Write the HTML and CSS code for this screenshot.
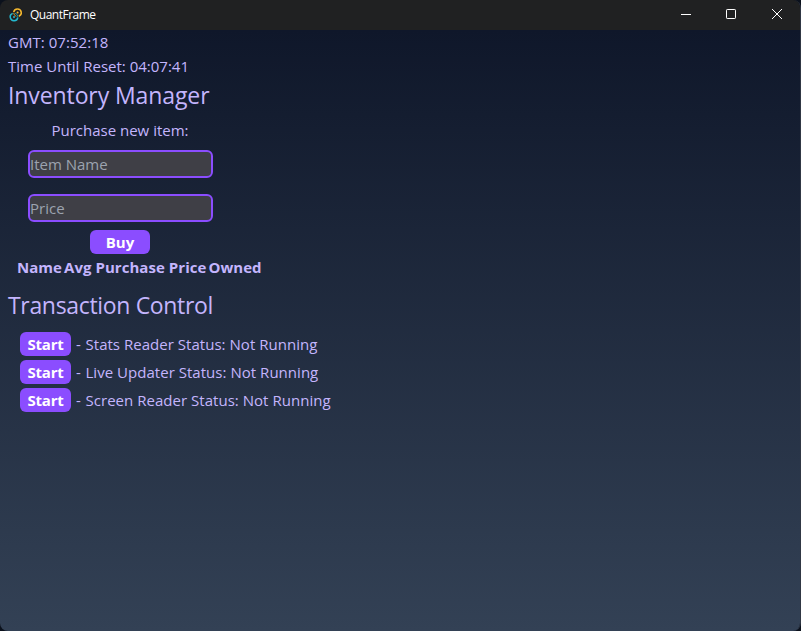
FILE: index.html
```html
<!DOCTYPE html>
<html lang="en">
<head>
<meta charset="utf-8">
<title>QuantFrame</title>
<link rel="stylesheet" href="styles.css">
</head>
<body>
<div class="window">
  <header class="titlebar">
    <svg class="logo" width="14" height="14" viewBox="0 0 14 14" fill="none" stroke-width="1.5">
      <path d="M4.7 4.2A3.8 3.8 0 1 1 9.8 8.3" stroke="#f5b82e"/>
      <path d="M8.8 9.4A3.8 3.8 0 1 1 3.7 5.4" stroke="#24b9cf"/>
      <path d="M4.7 4.9A3.8 3.8 0 0 0 7.4 8.4" stroke="#c99b30" stroke-width="1"/>
      <path d="M8.8 8.7A3.8 3.8 0 0 0 6.1 5.2" stroke="#2098aa" stroke-width="1"/>
      <circle cx="8.6" cy="4.6" r="1" fill="#f5b82e"/>
      <circle cx="5" cy="9" r="1" fill="#24b9cf"/>
    </svg>
    <span class="app-name">QuantFrame</span>
    <div class="controls">
      <svg width="46" height="30" viewBox="0 0 46 30"><path d="M18 14.5h10" stroke="#fff"/></svg>
      <svg width="45" height="30" viewBox="0 0 45 30"><rect x="17.5" y="9.5" width="9" height="9" rx=".7" fill="none" stroke="#fff"/></svg>
      <svg width="46" height="30" viewBox="0 0 46 30"><path d="M18 9l10 10M28 9l-10 10" stroke="#fff"/></svg>
    </div>
  </header>
  <main class="content">
    <p class="clock gmt">GMT: 07:52:18</p>
    <p class="clock reset">Time Until Reset: 04:07:41</p>
    <h1 class="inventory-title">Inventory Manager</h1>
    <form class="purchase">
      <label class="purchase-label" for="item">Purchase new item:</label>
      <input class="field" id="item" type="text" placeholder="Item Name">
      <input class="field" type="text" placeholder="Price">
      <button class="btn buy" type="button">Buy</button>
    </form>
    <div class="columns">
      <span class="col-name">Name</span><span class="col-price">Avg Purchase Price</span><span class="col-owned">Owned</span>
    </div>
    <h1 class="transaction-title">Transaction Control</h1>
    <ul class="services">
      <li><button class="btn start" type="button">Start</button><span class="dash">-</span><span class="stats">Stats Reader Status: Not Running</span></li>
      <li><button class="btn start" type="button">Start</button><span class="dash">-</span><span class="live">Live Updater Status: Not Running</span></li>
      <li><button class="btn start" type="button">Start</button><span class="dash">-</span><span class="screen">Screen Reader Status: Not Running</span></li>
    </ul>
  </main>
</div>
</body>
</html>
```
FILE: styles.css
```css
* { box-sizing: border-box; margin: 0; padding: 0; }
html { background: #0b111c; }
body { width: 801px; height: 631px; overflow: hidden; font: 15px/24px "Open Sans", "Noto Sans", sans-serif; color: #c4b5fd; }
.window { height: 631px; border-radius: 8px; overflow: hidden; display: flex; flex-direction: column; border-right: 1px solid #303744; }
.titlebar { height: 30px; flex: none; display: flex; align-items: center; background: #202122; color: #fff; padding-left: 9px; }
.logo { margin: -1px 7px 0 0; }
.app-name { font-size: 12px; line-height: 30px; letter-spacing: -0.5px; }
.controls { margin-left: auto; display: flex; }
.controls svg { display: block; }
.content { flex: 1; padding: 0 8px; background: linear-gradient(#0f172a, #334155); white-space: nowrap; }
h1 { font-size: 23px; font-weight: 400; line-height: 32px; }
.gmt { letter-spacing: 0.05px; }
.inventory-title { margin-top: 1px; letter-spacing: -0.1px; }
.transaction-title { letter-spacing: -0.33px; }
.purchase { width: 225px; display: flex; flex-direction: column; align-items: center; margin-top: 7px; }
.purchase-label { line-height: 24px; margin: 0 1px 8px 0; }
.field { width: 185px; height: 28px; border: 2px solid #8b4dff; border-radius: 6px; background: #3f3f46; font: inherit; color: #c4b5fd; margin-bottom: 16px; }
.field + .field { margin-bottom: 8px; }
.field::placeholder { color: #9ca3af; opacity: 1; }
.btn { height: 24px; border: 0; border-radius: 6px; background: #8b4dff; color: #fff; font: 700 15px/24px "Open Sans", "Noto Sans", sans-serif; }
.buy { width: 60px; margin-right: 1px; }
.columns { display: flex; font-weight: 700; margin: 1px 0 10px 9px; }
.col-name { width: 47px; }
.col-price { width: 144.5px; letter-spacing: 0.05px; }
.services { list-style: none; margin: 11px 0 0 12px; }
.services li { display: flex; height: 24px; margin-bottom: 4px; letter-spacing: 0.03px; }
.start { width: 51px; margin-right: 5px; letter-spacing: -0.25px; }
.dash { width: 9.5px; }
```
